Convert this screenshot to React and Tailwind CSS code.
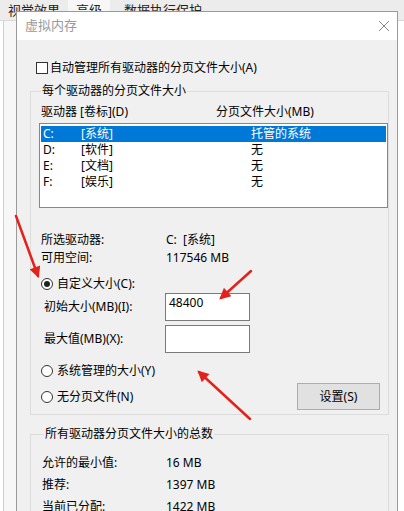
import React from 'react';

function Radio({checked}) {
    return (
        <span className="w-[12px] h-[12px] rounded-full border border-[#333] bg-white flex items-center justify-center shrink-0">
            {checked && <span className="w-[6px] h-[6px] rounded-full bg-[#222]"/>}
        </span>
    );
}

function GroupBox({label, className, children}) {
    return (
        <div className={"border border-[#dcdcdc] ml-[13px] w-[359px] " + className}>
            <div className="-mt-[9px] ml-[2px] px-[1px] w-fit bg-[#f0f0f0] leading-[16px]">{label}</div>
            {children}
        </div>
    );
}

const drives = [
    {d: 'C:', v: '[系统]', s: '托管的系统', sel: true},
    {d: 'D:', v: '[软件]', s: '无'},
    {d: 'E:', v: '[文档]', s: '无'},
    {d: 'F:', v: '[娱乐]', s: '无'},
];

export default function App() {
    return (
        <div className="relative w-[404px] h-[511px] overflow-hidden bg-white text-[12px] text-black font-['Noto_Sans','Noto_Sans_CJK_SC',sans-serif]">
            {/* window behind */}
            <div className="h-[21px] bg-[#ececec] border-b border-[#d9d9d9] flex items-start text-[13px] text-[#222]">
                <div className="pl-[8px] pr-[8px] pt-[1px] leading-[18px]">视觉效果</div>
                <div className="px-[8px] pt-[1px] leading-[18px] bg-[#f7f7f7]">高级</div>
                <div className="px-[14px] pt-[1px] leading-[18px]">数据执行保护</div>
            </div>
            <div className="h-[490px] flex">
                <div className="w-[3px] bg-white"/>
                <div className="w-[13px] border-l border-[#d0d0d0] bg-[#f7f7f7]"/>
            </div>

            {/* dialog */}
            <div className="absolute left-[16px] top-[11px] w-[382px] h-[520px] border border-[#9a9a9a] bg-[#f0f0f0]">
                <div className="h-[28px] bg-white flex items-center justify-between pl-[8px] pr-[6px]">
                    <span className="text-[13px] text-[#9a9a9a]">虚拟内存</span>
                    <svg width="14" height="14" viewBox="0 0 14 14">
                        <path d="M2 2 L12 12 M12 2 L2 12" stroke="#888" strokeWidth="1"/>
                    </svg>
                </div>

                <div className="mt-[20px] pl-[19px] flex items-center gap-[2px] leading-[16px]">
                    <span className="w-[12px] h-[12px] border border-[#333] bg-white"/>
                    <span>自动管理所有驱动器的分页文件大小(A)</span>
                </div>

                <GroupBox label="每个驱动器的分页文件大小" className="mt-[15px] pl-[8px]">
                    <div className="mt-[5px] ml-[2px] flex leading-[16px]">
                        <span className="w-[175px]">驱动器 [卷标](D)</span>
                        <span>分页文件大小(MB)</span>
                    </div>
                    <div className="mt-[3px] w-[349px] h-[85px] border border-[#828790] bg-white pt-[2px]">
                        {drives.map(r => (
                            <div key={r.d}
                                 className={"mx-[1px] h-[16px] leading-[16px] flex pl-[2px] " + (r.sel ? "bg-[#0078d7] text-white" : "")}>
                                <span className="w-[38px]">{r.d}</span>
                                <span className="w-[170px]">{r.v}</span>
                                <span>{r.s}</span>
                            </div>
                        ))}
                    </div>

                    <div className="mt-[24px] ml-[2px] flex leading-[16px]">
                        <span className="w-[125px]">所选驱动器:</span>
                        <span>C:&nbsp;&nbsp;[系统]</span>
                    </div>
                    <div className="mt-[2px] ml-[2px] flex leading-[16px]">
                        <span className="w-[125px]">可用空间:</span>
                        <span>117546 MB</span>
                    </div>

                    <div className="mt-[10px] ml-[2px] flex items-center gap-[4px] leading-[16px]">
                        <Radio checked/>
                        <span>自定义大小(C):</span>
                    </div>
                    <div className="mt-[1px] ml-[5px] flex items-center">
                        <span className="w-[121px] leading-[16px]">初始大小(MB)(I):</span>
                        <div className="w-[85px] h-[28px] border border-[#7a7a7a] bg-white pl-[3px] pt-[1px] leading-[16px]">48400</div>
                    </div>
                    <div className="mt-[4px] ml-[5px] flex items-center">
                        <span className="w-[121px] leading-[16px]">最大值(MB)(X):</span>
                        <div className="w-[85px] h-[28px] border border-[#7a7a7a] bg-white"/>
                    </div>

                    <div className="mt-[10px] ml-[2px] flex items-center gap-[4px] leading-[16px]">
                        <Radio/>
                        <span>系统管理的大小(Y)</span>
                    </div>
                    <div className="mt-[4px] ml-[2px] mb-[4px] flex items-center justify-between pr-[8px]">
                        <div className="flex items-center gap-[4px] leading-[16px]">
                            <Radio/>
                            <span>无分页文件(N)</span>
                        </div>
                        <div className="w-[83px] h-[27px] border border-[#adadad] bg-[#e1e1e1] flex items-center justify-center">
                            设置(S)
                        </div>
                    </div>
                </GroupBox>

                <GroupBox label="所有驱动器分页文件大小的总数" className="mt-[19px] pl-[11px] h-[120px]">
                    <div className="mt-[13px] flex leading-[16px]">
                        <span className="w-[124px]">允许的最小值:</span>
                        <span>16 MB</span>
                    </div>
                    <div className="mt-[6px] flex leading-[16px]">
                        <span className="w-[124px]">推荐:</span>
                        <span>1397 MB</span>
                    </div>
                    <div className="mt-[6px] flex leading-[16px]">
                        <span className="w-[124px]">当前已分配:</span>
                        <span>1422 MB</span>
                    </div>
                </GroupBox>
            </div>

            {/* red arrows */}
            <svg className="absolute left-0 top-0" width="404" height="511" viewBox="0 0 404 511">
                <defs>
                    <marker id="ah" viewBox="0 0 10 10" refX="8" refY="5" markerWidth="5" markerHeight="4.5" orient="auto">
                        <path d="M0 0 L10 5 L0 10 z" fill="#e3221c"/>
                    </marker>
                </defs>
                <g stroke="#e3221c" strokeWidth="2.5" strokeLinecap="round" fill="none" markerEnd="url(#ah)">
                    <line x1="16" y1="216" x2="38" y2="276"/>
                    <line x1="251" y1="271" x2="221" y2="298"/>
                    <line x1="250" y1="419" x2="199" y2="372"/>
                </g>
            </svg>
        </div>
    );
}
